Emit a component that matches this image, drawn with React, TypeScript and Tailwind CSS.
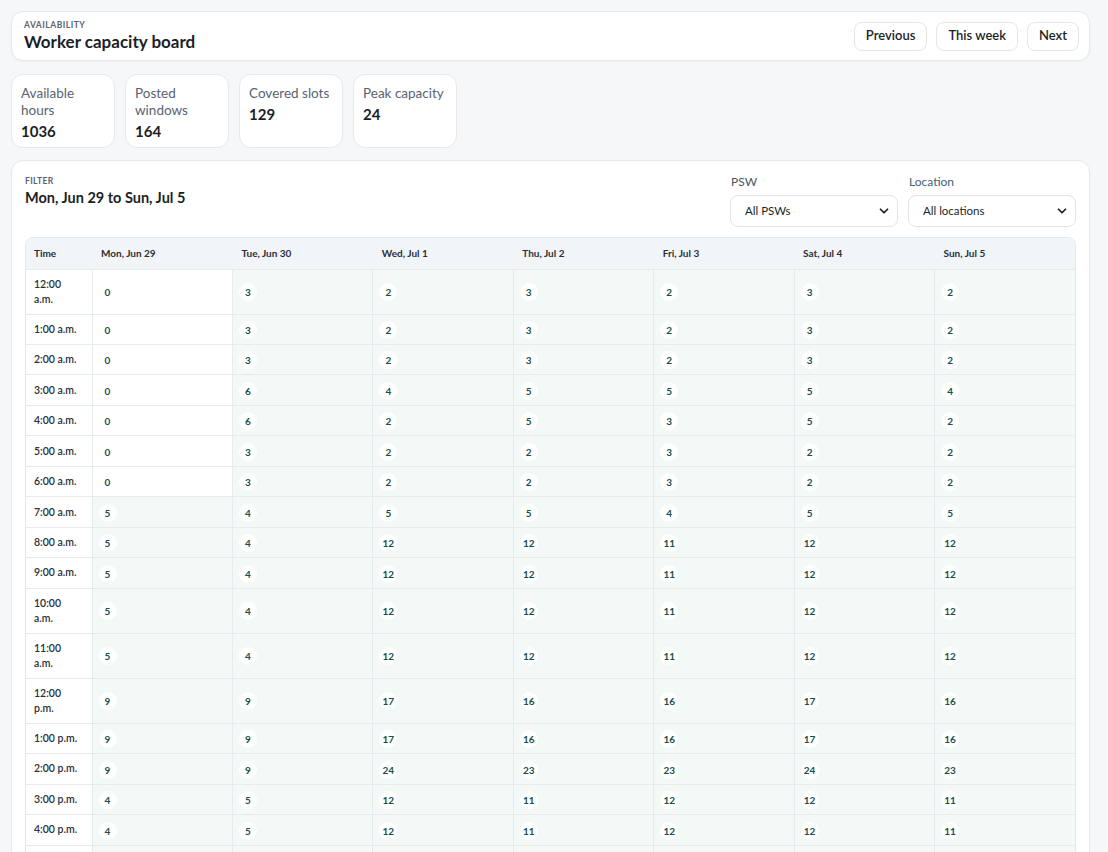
import { ChevronDown } from 'lucide-react'

const days = ['Mon, Jun 29', 'Tue, Jun 30', 'Wed, Jul 1', 'Thu, Jul 2', 'Fri, Jul 3', 'Sat, Jul 4', 'Sun, Jul 5']

const hours = [
  '12:00 a.m.', '1:00 a.m.', '2:00 a.m.', '3:00 a.m.', '4:00 a.m.', '5:00 a.m.', '6:00 a.m.', '7:00 a.m.',
  '8:00 a.m.', '9:00 a.m.', '10:00 a.m.', '11:00 a.m.', '12:00 p.m.', '1:00 p.m.', '2:00 p.m.', '3:00 p.m.',
  '4:00 p.m.', '5:00 p.m.', '6:00 p.m.', '7:00 p.m.', '8:00 p.m.', '9:00 p.m.', '10:00 p.m.', '11:00 p.m.',
]

// capacity per day column, one value per hour
const capacity: number[][] = [
  [0, 0, 0, 0, 0, 0, 0, 5, 5, 5, 5, 5, 9, 9, 9, 4, 4, 4, 3, 3, 2, 2, 0, 0],
  [3, 3, 3, 6, 6, 3, 3, 4, 4, 4, 4, 4, 9, 9, 9, 5, 5, 5, 4, 4, 3, 3, 3, 3],
  [2, 2, 2, 4, 2, 2, 2, 5, 12, 12, 12, 12, 17, 17, 24, 12, 12, 12, 6, 6, 4, 3, 2, 2],
  [3, 3, 3, 5, 5, 2, 2, 5, 12, 12, 12, 12, 16, 16, 23, 11, 11, 11, 6, 6, 4, 3, 3, 3],
  [2, 2, 2, 5, 3, 3, 3, 4, 11, 11, 11, 11, 16, 16, 23, 12, 12, 12, 6, 5, 4, 3, 2, 2],
  [3, 3, 3, 5, 5, 2, 2, 5, 12, 12, 12, 12, 17, 17, 24, 12, 12, 12, 6, 6, 4, 3, 3, 3],
  [2, 2, 2, 4, 2, 2, 2, 5, 12, 12, 12, 12, 16, 16, 23, 11, 11, 11, 6, 6, 4, 3, 2, 2],
]

const stats = [
  { label: 'Available hours', value: '1036' },
  { label: 'Posted windows', value: '164' },
  { label: 'Covered slots', value: '129' },
  { label: 'Peak capacity', value: '24' },
]

function NavButton({ label }: { label: string }) {
  return (
    <button className="h-[29px] px-[11px] rounded-lg border border-[#e3e6ea] bg-white text-[13px] font-semibold text-[#1c1f26]">
      {label}
    </button>
  )
}

function Filter({ label, value, tone }: { label: string; value: string; tone: string }) {
  return (
    <div className="flex flex-col gap-[6px]">
      <span className={`text-[12px] leading-[14px] ${tone} pl-[1px]`}>{label}</span>
      <div className="w-[168px] h-[32px] rounded-lg border border-[#e1e4e8] bg-white flex items-center justify-between pl-[14px] pr-[6px]">
        <span className="text-[11.5px] text-[#1c1f26]">{value}</span>
        <ChevronDown size={14} strokeWidth={3} className="text-[#1c1f26]" />
      </div>
    </div>
  )
}

export default function App() {
  return (
    <div className="min-h-[852px] bg-[#f6f7f9] pl-[11px] pr-[18px] py-[11px] flex flex-col gap-3 text-[#1c1f26]" style={{ fontFamily: 'Lato, "Noto Sans", sans-serif' }}>
      <div className="bg-white border border-[#e6e8eb] rounded-xl pl-[12px] pr-[10px] py-[7px] flex items-center justify-between shadow-[0_1px_2px_rgba(0,0,0,0.04)]">
        <div>
          <div className="text-[8.5px] leading-[12px] font-bold tracking-[0.06em] text-[#5b6270] uppercase">Availability</div>
          <h1 className="text-[17px] font-bold leading-[22px]">Worker capacity board</h1>
        </div>
        <div className="flex gap-[9px]">
          <NavButton label="Previous" />
          <NavButton label="This week" />
          <NavButton label="Next" />
        </div>
      </div>

      <div className="flex gap-[10px] pt-[1px]">
        {stats.map(s => (
          <div key={s.label} className="w-[104px] h-[74px] bg-white border border-[#e6e8eb] rounded-xl px-[9px] pt-[10px]">
            <div className="text-[13.5px] leading-[17px] text-[#5b6270]">{s.label}</div>
            <div className="text-[15px] font-bold leading-[22px] mt-[1px]">{s.value}</div>
          </div>
        ))}
      </div>

      <div className="bg-white border border-[#e6e8eb] rounded-xl px-[13px] pt-[14px] pb-4">
        <div className="flex justify-between">
          <div>
            <div className="text-[8.5px] leading-[12px] font-bold tracking-[0.04em] text-[#5b6270] uppercase">Filter</div>
            <div className="text-[14.5px] leading-[18px] font-bold mt-[2px]">Mon, Jun 29 to Sun, Jul 5</div>
          </div>
          <div className="flex gap-[10px]">
            <Filter label="PSW" value="All PSWs" tone="text-[#4b5563]" />
            <Filter label="Location" value="All locations" tone="text-[#3f5f7a]" />
          </div>
        </div>

        <div className="mt-[10px] border border-[#e3e8ed] rounded-lg overflow-hidden">
          <table className="w-full border-collapse table-fixed">
            <colgroup>
              <col className="w-[66px]" />
              {days.map(d => <col key={d} />)}
            </colgroup>
            <thead>
              <tr className="bg-[#f1f5f8] h-[31px]">
                <th className="text-left pl-[8px] text-[10px] font-bold text-[#2a2f3a]">Time</th>
                {days.map(d => (
                  <th key={d} className="text-left pl-[9px] text-[10px] font-bold text-[#2a2f3a]">{d}</th>
                ))}
              </tr>
            </thead>
            <tbody>
              {hours.map((h, i) => (
                <tr key={h} className="border-t border-[#e6ebef]">
                  <td className="pl-[8px] pr-[11px] py-[7px] text-[10.5px] font-semibold leading-[15px] text-[#2a2f3a] border-r border-[#e6ebef]">{h}</td>
                  {capacity.map((col, j) => {
                    const v = col[i]
                    return (
                      <td key={j} className={`pl-[6px] py-[7px] text-[10px] leading-[15px] border-r border-[#e6ebef] last:border-r-0 ${v === 0 ? 'bg-white' : 'bg-[#f3f9f7]'}`}>
                        <span className="inline-flex items-center justify-center min-w-[18px] h-[18px] -my-[2px] px-[2px] rounded-full bg-white text-[10px] font-bold text-[#17504a] leading-none align-middle">
                          {v}
                        </span>
                      </td>
                    )
                  })}
                </tr>
              ))}
            </tbody>
          </table>
        </div>
      </div>
    </div>
  )
}
